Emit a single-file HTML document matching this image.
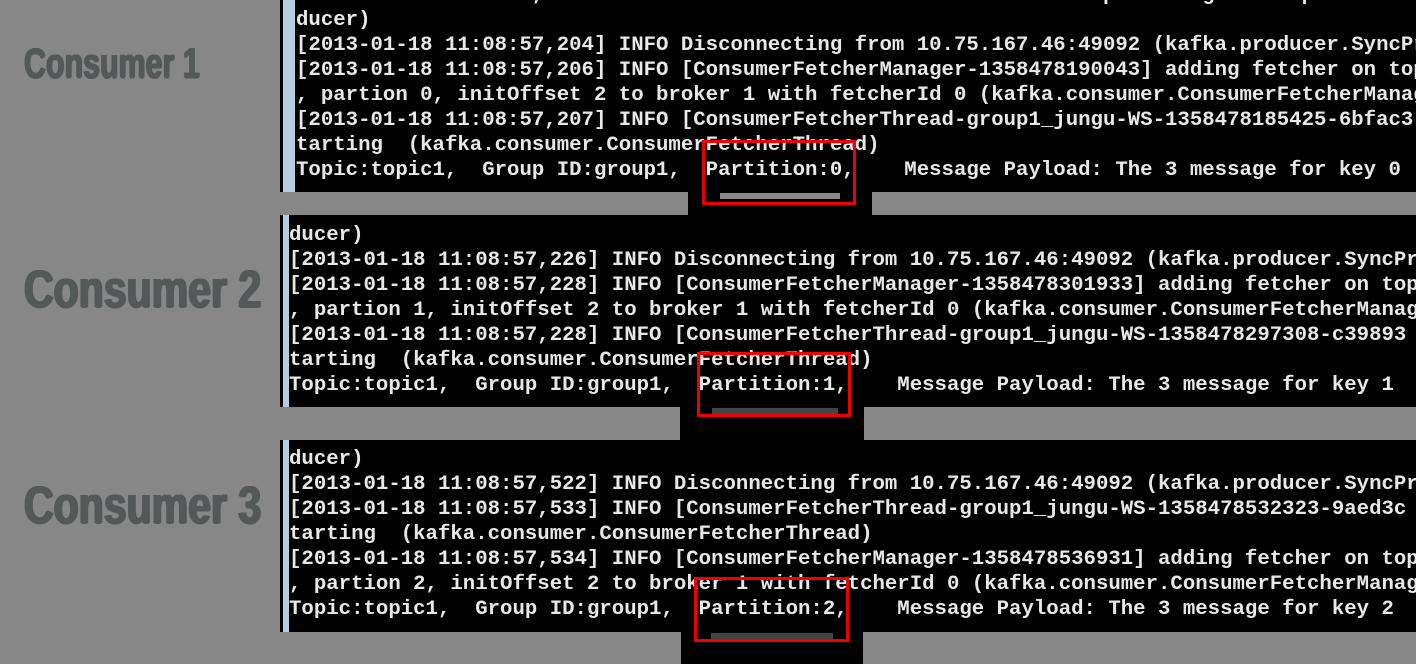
<!DOCTYPE html>
<html><head><meta charset="utf-8"><style>
body{margin:0;width:1416px;height:664px;background:#878787;position:relative;overflow:hidden;font-family:"Liberation Mono",monospace}
.p{position:absolute;background:#000;left:280px;width:1136px;overflow:hidden}
.strip{position:absolute;left:3px;top:0;bottom:0;width:6px;background:#b8cce0}
pre{position:absolute;margin:0;color:#e8e8e8;font:bold 20.7px/25px "Liberation Mono",monospace;white-space:pre;letter-spacing:0}
.ext{position:absolute;background:#000}
.box{position:absolute;border:3px solid #e00;box-sizing:border-box}
.lab{position:absolute;left:24px;color:#535858;font:bold 38px/40px "Liberation Sans",sans-serif;white-space:nowrap;transform-origin:0 0;text-shadow:1px 0 0 #535858,-1px 0 0 #535858,0 1px 0 #535858}
.bar{position:absolute;height:6px;background:#555}
</style></head><body>
<div class="lab" style="top:42px;transform:scale(0.8,1.1)">Consumer 1</div>
<div class="lab" style="top:262px;transform:scale(1.08,1.4)">Consumer 2</div>
<div class="lab" style="top:478px;transform:scale(1.08,1.4)">Consumer 3</div>

<div class="p" style="top:0;height:192px"><div class="strip" style="width:12px"></div>
<pre style="left:16px;top:-17px">2013-01-18 11:08:57,203 INFO Connected to 10.75.167.46:49092 for producing kafka.produ
ducer)
[2013-01-18 11:08:57,204] INFO Disconnecting from 10.75.167.46:49092 (kafka.producer.SyncProducer)
[2013-01-18 11:08:57,206] INFO [ConsumerFetcherManager-1358478190043] adding fetcher on topic
, partion 0, initOffset 2 to broker 1 with fetcherId 0 (kafka.consumer.ConsumerFetcherManager)
[2013-01-18 11:08:57,207] INFO [ConsumerFetcherThread-group1_jungu-WS-1358478185425-6bfac3
tarting  (kafka.consumer.ConsumerFetcherThread)
Topic:topic1,  Group ID:group1,  Partition:0,    Message Payload: The 3 message for key 0</pre></div>
<div class="ext" style="left:688px;top:190px;width:184px;height:27px"></div>

<div class="p" style="top:215px;height:192px"><div class="strip"></div>
<pre style="left:9px;top:8px">ducer)
[2013-01-18 11:08:57,226] INFO Disconnecting from 10.75.167.46:49092 (kafka.producer.SyncProducer)
[2013-01-18 11:08:57,228] INFO [ConsumerFetcherManager-1358478301933] adding fetcher on topic
, partion 1, initOffset 2 to broker 1 with fetcherId 0 (kafka.consumer.ConsumerFetcherManager)
[2013-01-18 11:08:57,228] INFO [ConsumerFetcherThread-group1_jungu-WS-1358478297308-c39893
tarting  (kafka.consumer.ConsumerFetcherThread)
Topic:topic1,  Group ID:group1,  Partition:1,    Message Payload: The 3 message for key 1</pre></div>
<div class="ext" style="left:680px;top:405px;width:184px;height:37px"></div>

<div class="p" style="top:440px;height:192px"><div class="strip"></div>
<pre style="left:9px;top:7px">ducer)
[2013-01-18 11:08:57,522] INFO Disconnecting from 10.75.167.46:49092 (kafka.producer.SyncProducer)
[2013-01-18 11:08:57,533] INFO [ConsumerFetcherThread-group1_jungu-WS-1358478532323-9aed3c
tarting  (kafka.consumer.ConsumerFetcherThread)
[2013-01-18 11:08:57,534] INFO [ConsumerFetcherManager-1358478536931] adding fetcher on topic
, partion 2, initOffset 2 to broker 1 with fetcherId 0 (kafka.consumer.ConsumerFetcherManager)
Topic:topic1,  Group ID:group1,  Partition:2,    Message Payload: The 3 message for key 2</pre></div>
<div class="ext" style="left:681px;top:630px;width:182px;height:34px"></div>

<div class="bar" style="left:720px;top:193px;width:120px;background:#888"></div>
<div class="bar" style="left:712px;top:408px;width:126px;background:#444"></div>
<div class="bar" style="left:711px;top:633px;width:122px;background:#444"></div>
<div class="box" style="left:702px;top:140px;width:154px;height:65px"></div>
<div class="box" style="left:697px;top:352px;width:154px;height:65px"></div>
<div class="box" style="left:694px;top:577px;width:155px;height:65px"></div>
</body></html>
